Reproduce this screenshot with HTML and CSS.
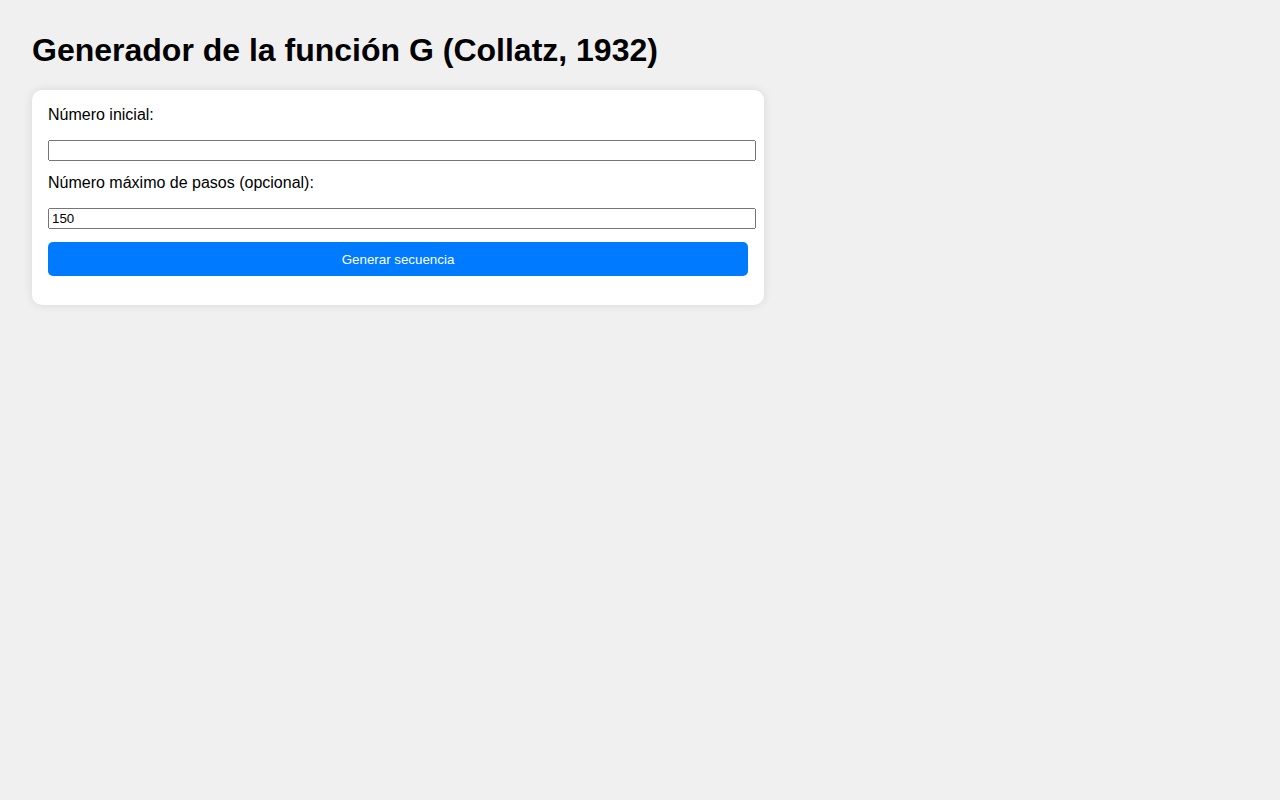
FILE: index.html
```html
<!DOCTYPE html>
<html lang="es">
<head>
<meta charset="utf-8">
<title>Generador de la función G (Collatz, 1932)</title>
<link rel="stylesheet" href="styles.css">
</head>
<body>
<h1 class="title">Generador de la función G (Collatz, 1932)</h1>
<div class="card">
  <label class="label" for="inicio">Número inicial:</label>
  <input class="field" type="number" id="inicio">
  <label class="label label-next" for="pasos">Número máximo de pasos (opcional):</label>
  <input class="field" type="number" id="pasos" value="150">
  <button class="btn" type="button">Generar secuencia</button>
</div>
</body>
</html>
```
FILE: styles.css
```css
body {
  margin: 0;
  padding: 32px;
  background: #f0f0f0;
  font-family: "Liberation Sans", Arial, sans-serif;
  color: #000;
}
.title {
  font-size: 32px;
  font-weight: bold;
  margin: 0 0 21.44px;
  line-height: normal;
}
.card {
  background: #fff;
  width: 700px;
  padding: 16px;
  border-radius: 10px;
  box-shadow: 0 0 10px rgba(0, 0, 0, 0.1);
}
.label {
  display: block;
  font-size: 16px;
  line-height: normal;
  margin-bottom: 16px;
}
.label-next {
  margin-top: 1px;
}
.field {
  display: block;
  width: 100%;
  margin: 0 0 13px;
  font-family: "Liberation Sans", Arial, sans-serif;
  font-size: 13.333px;
}
.btn {
  display: block;
  width: 100%;
  height: 34px;
  margin: 0 0 13px;
  border: none;
  border-radius: 5px;
  background: #007bff;
  color: #fff;
  font-family: "Liberation Sans", Arial, sans-serif;
  font-size: 13.333px;
  cursor: pointer;
}
```
